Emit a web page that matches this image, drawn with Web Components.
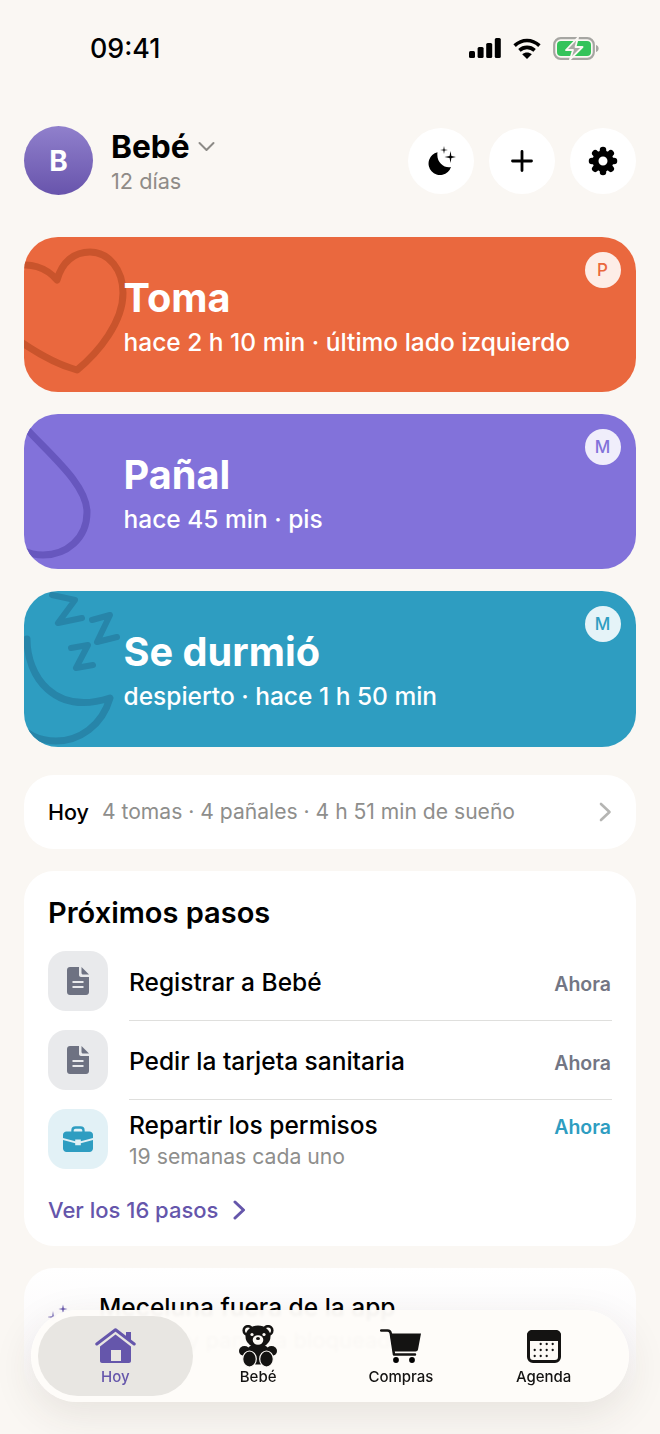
<!DOCTYPE html>
<html lang="es">
<head>
<meta charset="utf-8">
<title>Hoy</title>
<style>
  html, body { margin: 0; padding: 0; background: #faf7f3; }
  body { font-family: "Inter", "Liberation Sans", sans-serif; color: #000; }
</style>
</head>
<body>
<app-screen>
  <status-bar></status-bar>
  <baby-header></baby-header>
  <activity-card kind="feed" badge="P" title="Toma" sub="hace 2 h 10 min · último lado izquierdo"></activity-card>
  <activity-card kind="diaper" badge="M" title="Pañal" sub="hace 45 min · pis"></activity-card>
  <activity-card kind="sleep" badge="M" title="Se durmió" sub="despierto · hace 1 h 50 min"></activity-card>
  <today-row></today-row>
  <steps-card>
    <step-row icon="doc" when="Ahora" label="Registrar a Bebé"></step-row>
    <step-row icon="doc" when="Ahora" label="Pedir la tarjeta sanitaria"></step-row>
    <step-row icon="case" when="Ahora" label="Repartir los permisos" sub="19 semanas cada uno" last></step-row>
  </steps-card>
  <promo-card></promo-card>
  <tab-bar></tab-bar>
</app-screen>

<script>
class AppScreen extends HTMLElement {
  connectedCallback() {
    this.attachShadow({ mode: 'open' });
    this.shadowRoot.innerHTML = `
      <style>
        :host {
          display: flex;
          flex-direction: column;
          gap: 22px;
          position: relative;
          height: 1434px;
          padding: 0 24px;
          box-sizing: border-box;
          overflow: hidden;
          background: #faf7f3;
        }
      </style>
      <slot></slot>
    `;
  }
}

class StatusBar extends HTMLElement {
  connectedCallback() {
    this.attachShadow({ mode: 'open' });
    this.shadowRoot.innerHTML = `
      <style>
        :host {
          display: flex;
          justify-content: space-between;
          align-items: center;
          height: 30px;
          margin: 33px 0 41px;
          padding: 0 37px 0 66px;
        }
        .time { font-size: 26.800px; font-weight: 500; }
        .icons { display: flex; align-items: center; gap: 12px; }
        svg { display: block; }
      </style>
      <span class="time">09:41</span>
      <div class="icons">
        <svg width="32" height="20" viewBox="0 0 32 20">
          <rect x="0" y="13" width="6" height="7" rx="1.500"/>
          <rect x="8.600" y="9" width="6" height="11" rx="1.500"/>
          <rect x="17.200" y="5" width="6" height="15" rx="1.500"/>
          <rect x="25.800" y="0" width="6" height="20" rx="1.500"/>
        </svg>
        <svg width="28" height="21" viewBox="0 0 28 21" fill="none" stroke="#000" stroke-width="3.600">
          <path d="M1.600 7.600C9 .8 19 .8 26.400 7.600"/>
          <path d="M6.400 12.400C10.800 8.400 17.200 8.400 21.600 12.400"/>
          <path d="M14 21 9.200 16.200C12 13.800 16 13.800 18.800 16.200Z" fill="#000" stroke="none"/>
        </svg>
        <svg width="46" height="23" viewBox="0 0 46 23">
          <rect x="1.200" y="1.200" width="39.600" height="20.600" rx="6.500" fill="none" stroke="#a6a6a2" stroke-width="2.200"/>
          <rect x="4" y="4" width="34" height="15" rx="4" fill="#34c35a"/>
          <path d="M43 8v7c1.600-.4 2.600-1.800 2.600-3.500S44.600 8.400 43 8Z" fill="#a6a6a2"/>
          <path d="M25 .5 13 13h7l-3 9.500L29.500 10h-7Z" fill="#a9a9a5" stroke="#faf7f3" stroke-width="1.800" stroke-linejoin="round"/>
        </svg>
      </div>
    `;
  }
}

class RoundButton extends HTMLElement {
  connectedCallback() {
    this.attachShadow({ mode: 'open' });
    this.shadowRoot.innerHTML = `
      <style>
        :host {
          display: flex;
          align-items: center;
          justify-content: center;
          width: 66px;
          height: 66px;
          border-radius: 50%;
          background: #fff;
        }
      </style>
      <slot></slot>
    `;
  }
}

class BabyHeader extends HTMLElement {
  connectedCallback() {
    const teeth = [0, 45, 90, 135, 180, 225, 270, 315]
      .map((deg) => `<path d="M15 4v1" transform="rotate(${deg} 15 15)"/>`)
      .join('');

    this.attachShadow({ mode: 'open' });
    this.shadowRoot.innerHTML = `
      <style>
        :host { display: flex; align-items: center; height: 69px; margin-bottom: 20px; }
        .avatar {
          width: 69px;
          height: 69px;
          border-radius: 50%;
          background: linear-gradient(#9080cc, #6854ac);
          color: #fff;
          font-size: 28px;
          font-weight: 700;
          display: flex;
          align-items: center;
          justify-content: center;
        }
        .who { margin-left: 18px; padding-top: 4px; flex: 1; }
        .name { display: flex; align-items: center; gap: 8px; font-size: 31.700px; font-weight: 700; line-height: 38px; margin-top: -3px; }
        .age { font-size: 21.700px; color: #8f8b87; line-height: 28px; margin-top: 1px; }
        .actions { display: flex; gap: 15px; }
        svg { display: block; }
      </style>
      <div class="avatar">B</div>
      <div class="who">
        <div class="name">Bebé
          <svg width="17" height="11" viewBox="0 0 17 11" fill="none" stroke="#8c8a86" stroke-width="2" stroke-linecap="round" stroke-linejoin="round"><path d="M1.500 2 8.500 9 15.500 2"/></svg>
        </div>
        <div class="age">12 días</div>
      </div>
      <div class="actions">
        <round-button>
          <svg width="30" height="30" viewBox="0 0 30 30">
            <path d="M11.500 6.300A11.500 11.500 0 1 0 25 21C18 22.500 10 16 11.500 6.300Z"/>
            <path d="M24.500 5 25.400 10.100 30.500 11 25.400 11.900 24.500 17 23.600 11.900 18.500 11 23.600 10.100Z"/>
            <path d="M18 0 18.600 3.400 22 4 18.600 4.600 18 8 17.400 4.600 14 4 17.400 3.400Z"/>
          </svg>
        </round-button>
        <round-button>
          <svg width="24" height="24" viewBox="0 0 24 24" fill="none" stroke="#000" stroke-width="2.800" stroke-linecap="round"><path d="M12 2.500v19M2.500 12h19"/></svg>
        </round-button>
        <round-button>
          <svg width="30" height="30" viewBox="0 0 30 30" fill="none" stroke="#000" stroke-linecap="round">
            <circle cx="15" cy="15" r="7.500" stroke-width="6"/>
            <g stroke-width="6.500">${teeth}</g>
          </svg>
        </round-button>
      </div>
    `;
  }
}

const cardArt = {
  feed: {
    bg: '#ea683e',
    line: '#c9542c',
    art: `<path d="M-10 30C5 25 22 30 33 43C38 25 50 15 66 15C85 15 99 33 99 56C99 85 75 115 53 133C35 128 15 118-10 100"/>`,
  },
  diaper: {
    bg: '#8272da',
    line: '#6757be',
    art: `<path d="M-2 10C25 40 63 70 63 98C63 125 42 141 19 141C8 141 0 138-8 132"/>`,
  },
  sleep: {
    bg: '#2e9dc1',
    line: '#2785a9',
    art: `<path d="M3 48C3 85 30 125 86 107C78 135 55 150 32 150C15 150 0 143-8 130"/>
      <path stroke-width="6" d="M28 4 51 9 34 32 58 27"/>
      <path stroke-width="6" d="M68 29 86 24 73 51 93 46"/>
      <path stroke-width="6" d="M47 57 64 54 52 77 69 74"/>`,
  },
};

class ActivityCard extends HTMLElement {
  connectedCallback() {
    const art = cardArt[this.getAttribute('kind')];
    this.attachShadow({ mode: 'open' });
    this.shadowRoot.innerHTML = `
      <style>
        :host {
          display: flex;
          flex-direction: column;
          justify-content: center;
          position: relative;
          flex: none;
          height: 155.200px;
          box-sizing: border-box;
          padding: 3px 0 0 99.500px;
          border-radius: 34px;
          overflow: hidden;
          color: #fff;
          background: ${art.bg};
        }
        .art { position: absolute; left: 0; top: 0; }
        .title { position: relative; font-size: 39.700px; font-weight: 700; line-height: 46px; }
        .sub { position: relative; font-size: 24.500px; font-weight: 500; line-height: 30px; margin-top: 6px; }
        .badge {
          position: absolute;
          top: 15px;
          right: 15.500px;
          width: 36px;
          height: 36px;
          border-radius: 50%;
          background: rgba(255, 255, 255, 0.88);
          color: ${art.bg};
          font-size: 17px;
          font-weight: 500;
          display: flex;
          align-items: center;
          justify-content: center;
        }
      </style>
      <svg class="art" width="130" height="156" viewBox="0 0 130 156" fill="none" stroke="${art.line}" stroke-width="7" stroke-linecap="round" stroke-linejoin="round">${art.art}</svg>
      <div class="title">${this.getAttribute('title')}</div>
      <div class="sub">${this.getAttribute('sub')}</div>
      <div class="badge">${this.getAttribute('badge')}</div>
    `;
  }
}

class TodayRow extends HTMLElement {
  connectedCallback() {
    this.attachShadow({ mode: 'open' });
    this.shadowRoot.innerHTML = `
      <style>
        :host {
          display: flex;
          align-items: center;
          flex: none;
          height: 74px;
          margin-top: 6px;
          padding: 0 24px;
          border-radius: 30px;
          background: #fff;
          font-size: 21.100px;
        }
        b { font-weight: 500; font-size: 21.500px; margin-right: 13px; }
        span { flex: 1; color: #8e8e8c; }
        svg { display: block; }
      </style>
      <b>Hoy</b>
      <span>4 tomas · 4 pañales · 4 h 51 min de sueño</span>
      <svg width="13" height="20" viewBox="0 0 13 20" fill="none" stroke="#b5b5b3" stroke-width="2.600" stroke-linecap="round" stroke-linejoin="round"><path d="M2 2 10.500 10 2 18"/></svg>
    `;
  }
}

class StepsCard extends HTMLElement {
  connectedCallback() {
    this.attachShadow({ mode: 'open' });
    this.shadowRoot.innerHTML = `
      <style>
        :host {
          display: block;
          flex: none;
          height: 375px;
          box-sizing: border-box;
          padding: 24px 24px 0;
          border-radius: 30px;
          background: #fff;
        }
        h2 { margin: 0 0 20px; font-size: 29px; font-weight: 600; line-height: 36px; }
        .more {
          display: flex;
          align-items: center;
          gap: 15px;
          margin-top: 26px;
          font-size: 22px;
          font-weight: 500;
          line-height: 30px;
          color: #6556ab;
        }
        svg { display: block; }
      </style>
      <h2>Próximos pasos</h2>
      <slot></slot>
      <div class="more">Ver los 16 pasos
        <svg width="13" height="20" viewBox="0 0 13 20" fill="none" stroke="#6556ab" stroke-width="3" stroke-linecap="round" stroke-linejoin="round"><path d="M2 2 10.500 10 2 18"/></svg>
      </div>
    `;
  }
}

const stepIcons = {
  doc: `<svg width="22" height="28" viewBox="0 0 22 28">
      <path d="M3 0h9v8c0 1.100.9 2 2 2h8v15c0 1.700-1.300 3-3 3H3c-1.700 0-3-1.300-3-3V3c0-1.700 1.300-3 3-3Z" fill="#6e7282"/>
      <path d="M14.500 0 22 7.500h-6c-.8 0-1.500-.7-1.500-1.500Z" fill="#6e7282"/>
      <path d="M5.500 15h11M5.500 20h11" stroke="#e9eaec" stroke-width="2"/>
    </svg>`,
  case: `<svg width="30" height="26" viewBox="0 0 30 26">
      <path d="M9.500 6V4.500C9.500 2.600 11 1.500 12.500 1.500h5c1.500 0 3 1.100 3 3V6" fill="none" stroke="#2e9dc1" stroke-width="2.400"/>
      <path d="M3.500 5.500h23c1.900 0 3.500 1.500 3.500 3.300V12L17.800 15.200v-1.700h-5.600v1.700L0 12V8.800c0-1.800 1.600-3.300 3.500-3.300Z" fill="#2e9dc1"/>
      <path d="M0 14l12.200 3.200v2h5.600v-2L30 14v8.500c0 1.900-1.600 3.500-3.500 3.500h-23C1.600 26 0 24.400 0 22.500Z" fill="#2e9dc1"/>
    </svg>`,
};

class StepRow extends HTMLElement {
  connectedCallback() {
    const icon = this.getAttribute('icon');
    const sub = this.getAttribute('sub');
    this.attachShadow({ mode: 'open' });
    this.shadowRoot.innerHTML = `
      <style>
        :host { display: flex; gap: 21px; height: 60px; margin-bottom: 19px; }
        :host([last]) { margin-bottom: 0; }
        .icon {
          flex: none;
          width: 60px;
          height: 60px;
          border-radius: 18px;
          display: flex;
          align-items: center;
          justify-content: center;
          background: ${icon === 'case' ? '#e2f1f6' : '#e9eaec'};
        }
        .body { flex: 1; position: relative; display: flex; flex-direction: column; justify-content: center; padding-top: 3px; }
        :host(:not([last])) .body::after {
          content: '';
          position: absolute;
          left: 0;
          right: 0;
          bottom: -10px;
          height: 1px;
          background: #dfdfdd;
        }
        .top { display: flex; justify-content: space-between; align-items: center; }
        .label { font-size: 24.500px; font-weight: 500; line-height: 30px; }
        .when { font-size: 19.500px; font-weight: 600; color: ${icon === 'case' ? '#2e9dc1' : '#737684'}; margin: 3px 1px 0 0; }
        .sub { font-size: 21.200px; color: #8e8e8c; line-height: 28px; margin-top: 2px; }
      </style>
      <div class="icon">${stepIcons[icon]}</div>
      <div class="body">
        <div class="top">
          <span class="label">${this.getAttribute('label')}</span>
          <span class="when">${this.getAttribute('when')}</span>
        </div>
        ${sub ? `<div class="sub">${sub}</div>` : ''}
      </div>
    `;
  }
}

class PromoCard extends HTMLElement {
  connectedCallback() {
    this.attachShadow({ mode: 'open' });
    this.shadowRoot.innerHTML = `
      <style>
        :host {
          display: flex;
          gap: 21px;
          height: 130px;
          flex: none;
          box-sizing: border-box;
          padding: 24px 24px 0;
          border-radius: 30px;
          background: linear-gradient(#fff 0, #fbf9fa 60%, #faf7f3 100%);
        }
        svg { flex: none; display: block; margin-top: 8px; }
        .title { font-size: 24.500px; font-weight: 500; line-height: 30px; }
        .sub { font-size: 22px; color: #8e8e8c; line-height: 28px; margin-top: 4px; }
      </style>
      <svg width="30" height="46" viewBox="0 0 30 46" fill="#6556ab">
        <path d="M15 4.500 15.800 8.200 19.500 9 15.800 9.800 15 13.500 14.200 9.800 10.500 9 14.200 8.200Z"/>
        <path d="M5 11 6 16 11 17 6 18 5 23 4 18-1 17 4 16Z" opacity=".7"/>
        <path d="M16 23 18.500 30 25.500 32.500 18.500 35 16 42 13.500 35 6.500 32.500 13.500 30Z" opacity=".5"/>
      </svg>
      <div>
        <div class="title">Meceluna fuera de la app</div>
        <div class="sub">Con Siri y pantalla bloqueada</div>
      </div>
    `;
  }
}

const tabIcons = {
  home: `<svg width="41" height="36" viewBox="0 0 41 36">
      <path d="M31 4h5v9.500L31 9.500Z" fill="#6556ab"/>
      <path d="M1.800 16 20.500 1.800 39.200 16" fill="none" stroke="#6556ab" stroke-width="3" stroke-linecap="round" stroke-linejoin="round"/>
      <path fill-rule="evenodd" d="M20.500 6.500 36 18.500V33c0 1.200-.9 2-2 2H7c-1.100 0-2-.8-2-2V18.500ZM16 22v11h10V22Z" fill="#6556ab"/>
    </svg>`,
  bear: `<svg width="38" height="42" viewBox="0 0 38 42" fill="#141312">
      <circle cx="9" cy="5.500" r="4.300" fill="#fdfaf6" stroke="#141312" stroke-width="2.600"/>
      <circle cx="29" cy="5.500" r="4.300" fill="#fdfaf6" stroke="#141312" stroke-width="2.600"/>
      <ellipse cx="19" cy="11.500" rx="12.500" ry="11"/>
      <ellipse cx="19" cy="29" rx="12" ry="10.500"/>
      <ellipse cx="5.500" cy="26" rx="5.500" ry="5"/>
      <ellipse cx="32.500" cy="26" rx="5.500" ry="5"/>
      <ellipse cx="10.500" cy="34" rx="6.800" ry="8" stroke="#fdfaf6" stroke-width="1.200"/>
      <ellipse cx="27.500" cy="34" rx="6.800" ry="8" stroke="#fdfaf6" stroke-width="1.200"/>
      <ellipse cx="19" cy="15" rx="5.300" ry="4.800" fill="#fdfaf6"/>
      <ellipse cx="19" cy="13.500" rx="2" ry="1.500"/>
      <circle cx="13" cy="9.500" r="1.600" fill="#fdfaf6"/>
      <circle cx="25" cy="9.500" r="1.600" fill="#fdfaf6"/>
    </svg>`,
  cart: `<svg width="41" height="34" viewBox="0 0 41 34">
      <path d="M1.200 1.500H7.500C9.500 1.500 10.500 2.800 10.800 4.500L14 25.500H35" fill="none" stroke="#141312" stroke-width="2.500" stroke-linecap="round" stroke-linejoin="round"/>
      <path d="M10 4.500H41L38 20.500C37.800 21.800 36.800 22.500 35.500 22.500H13Z" fill="#141312"/>
      <circle cx="16" cy="31" r="2.900"/>
      <circle cx="32" cy="31" r="2.900"/>
    </svg>`,
  cal: `<svg width="34" height="33" viewBox="0 0 34 33">
      <rect x="1.500" y="1.500" width="31" height="30" rx="4.500" fill="#fdfaf6" stroke="#141312" stroke-width="3"/>
      <path d="M5 0h24c2.800 0 5 2.200 5 5v6H0V5c0-2.800 2.200-5 5-5Z" fill="#141312"/>
      <g fill="#141312">
        <circle cx="13.700" cy="14" r="1.150"/><circle cx="19.700" cy="14" r="1.150"/><circle cx="25.700" cy="14" r="1.150"/>
        <circle cx="7.700" cy="20" r="1.150"/><circle cx="13.700" cy="20" r="1.150"/><circle cx="19.700" cy="20" r="1.150"/><circle cx="25.700" cy="20" r="1.150"/>
        <circle cx="7.700" cy="26" r="1.150"/><circle cx="13.700" cy="26" r="1.150"/><circle cx="19.700" cy="26" r="1.150"/>
      </g>
    </svg>`,
};

class TabBar extends HTMLElement {
  connectedCallback() {
    const tabs = [
      ['home', 'Hoy'],
      ['bear', 'Bebé'],
      ['cart', 'Compras'],
      ['cal', 'Agenda'],
    ];
    this.attachShadow({ mode: 'open' });
    this.shadowRoot.innerHTML = `
      <style>
        :host {
          position: absolute;
          left: 31px;
          top: 1310px;
          width: 598px;
          height: 92px;
          box-sizing: border-box;
          padding: 6px 14px 6px 13px;
          display: grid;
          grid-template-columns: repeat(4, 1fr);
          border-radius: 46px;
          background: rgba(254, 252, 249, 0.96);
          backdrop-filter: blur(1.500px);
          box-shadow: 0 12px 40px rgba(60, 50, 40, 0.1);
        }
        .tab {
          position: relative;
          display: flex;
          flex-direction: column;
          align-items: center;
          justify-content: flex-end;
          padding-bottom: 10px;
          font-size: 15px;
          font-weight: 500;
          line-height: 18px;
          color: #141312;
        }
        .tab > * { position: relative; }
        .tab.active { color: #6556ab; }
        .tab.active::before {
          content: '';
          position: absolute;
          left: -6px;
          right: -6px;
          top: 0;
          bottom: 0;
          border-radius: 40px;
          background: #e8e6e2;
        }
        .ico { height: 44px; display: flex; align-items: center; justify-content: center; }
        svg { display: block; }
      </style>
      ${tabs.map(([icon, label], i) => `
        <div class="tab ${i === 0 ? 'active' : ''}">
          <div class="ico">${tabIcons[icon]}</div>
          <span>${label}</span>
        </div>
      `).join('')}
    `;
  }
}

customElements.define('app-screen', AppScreen);
customElements.define('status-bar', StatusBar);
customElements.define('round-button', RoundButton);
customElements.define('baby-header', BabyHeader);
customElements.define('activity-card', ActivityCard);
customElements.define('today-row', TodayRow);
customElements.define('steps-card', StepsCard);
customElements.define('step-row', StepRow);
customElements.define('promo-card', PromoCard);
customElements.define('tab-bar', TabBar);
</script>
</body>
</html>
